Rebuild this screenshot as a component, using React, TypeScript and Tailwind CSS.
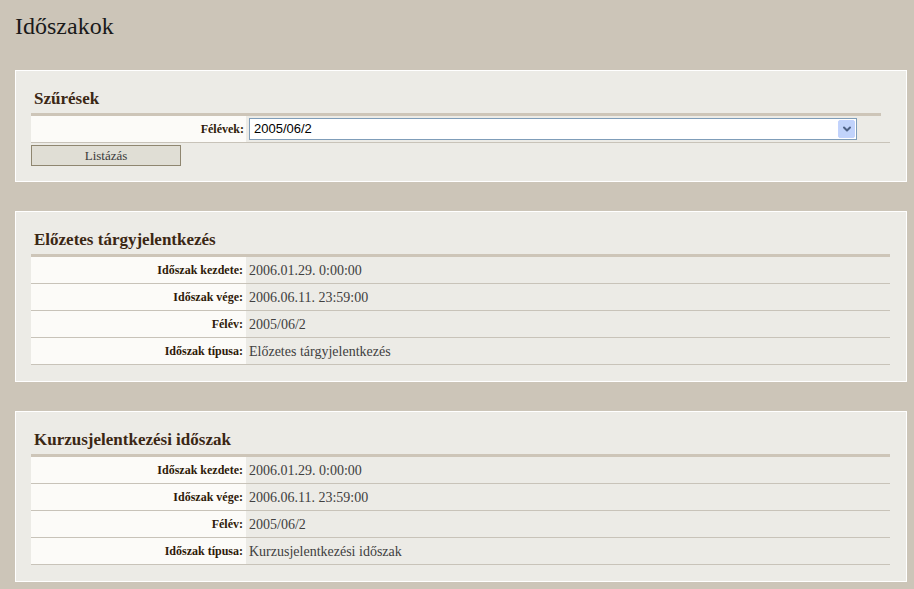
import { ChevronDown } from 'lucide-react'

interface Row {
  label: string
  value: string
}

const periods: { title: string; rows: Row[] }[] = [
  {
    title: 'Előzetes tárgyjelentkezés',
    rows: [
      { label: 'Időszak kezdete:', value: '2006.01.29. 0:00:00' },
      { label: 'Időszak vége:', value: '2006.06.11. 23:59:00' },
      { label: 'Félév:', value: '2005/06/2' },
      { label: 'Időszak típusa:', value: 'Előzetes tárgyjelentkezés' },
    ],
  },
  {
    title: 'Kurzusjelentkezési időszak',
    rows: [
      { label: 'Időszak kezdete:', value: '2006.01.29. 0:00:00' },
      { label: 'Időszak vége:', value: '2006.06.11. 23:59:00' },
      { label: 'Félév:', value: '2005/06/2' },
      { label: 'Időszak típusa:', value: 'Kurzusjelentkezési időszak' },
    ],
  },
]

const Panel = ({ children, className = '' }: { children: React.ReactNode; className?: string }) => (
  <div className={`ml-[15px] w-[892px] border border-white bg-[#ecebe6] pl-[15px] pr-[16px] ${className}`}>
    {children}
  </div>
)

const Heading = ({ text }: { text: string }) => (
  <h2 className="h-[42px] pt-[18px] pl-[3px] text-[17px] leading-[20px] font-bold text-[#3b2714]">
    {text}
  </h2>
)

const App = () => {
  return (
    <div className="min-h-screen bg-[#ccc5b8] font-['Liberation_Serif',serif] pb-[20px]">
      {/* Title */}
      <h1 className="h-[70px] pl-[15px] pt-[12px] text-[24px] leading-[28px] text-[#1a1a1a]">Időszakok</h1>

      {/* Filters */}
      <Panel className="pb-[15px]">
        <Heading text="Szűrések" />
        <div className="mr-[9px] h-[3px] bg-[#cdc5b8]" />
        <div className="flex h-[27px] border-b border-[#c8c3b9]">
          <div className="flex w-[215px] items-center justify-end bg-[#fcfbf8] pr-[2px] text-[12px] font-bold text-[#2e1a08]">
            Félévek:
          </div>
          <div className="flex items-center pl-[3px]">
            <div className="flex h-[22px] w-[608px] items-center justify-between border border-[#7f9db9] bg-white pl-[4px] pr-[1px] font-['Liberation_Sans',sans-serif] text-[13px] text-black">
              <span>2005/06/2</span>
              <span className="flex h-[18px] w-[17px] items-center justify-center rounded-[2px] border border-[#c3d3fd] bg-[#c1d3fb]">
                <ChevronDown className="h-[12px] w-[12px] text-[#4d6185]" strokeWidth={4} />
              </span>
            </div>
          </div>
        </div>
        <button className="mt-[2px] block h-[21px] w-[150px] border border-[#8f8670] bg-[#e0ded5] text-[13px] leading-[18px] text-[#3a3a3a]">
          Listázás
        </button>
      </Panel>

      {periods.map((p) => (
        <Panel key={p.title} className="mt-[29px] pb-[16px]">
          <Heading text={p.title} />
          <div className="h-[3px] bg-[#cdc5b8]" />
          {p.rows.map((r) => (
            <div key={r.label} className="flex h-[27px] border-b border-[#c8c3b9]">
              <div className="flex w-[215px] items-center justify-end bg-[#fcfbf8] pr-[3px] text-[12px] font-bold text-[#2e1a08]">
                {r.label}
              </div>
              <div className="flex items-center pl-[3px] text-[14px] text-[#404040]">{r.value}</div>
            </div>
          ))}
        </Panel>
      ))}
    </div>
  )
}

export default App
